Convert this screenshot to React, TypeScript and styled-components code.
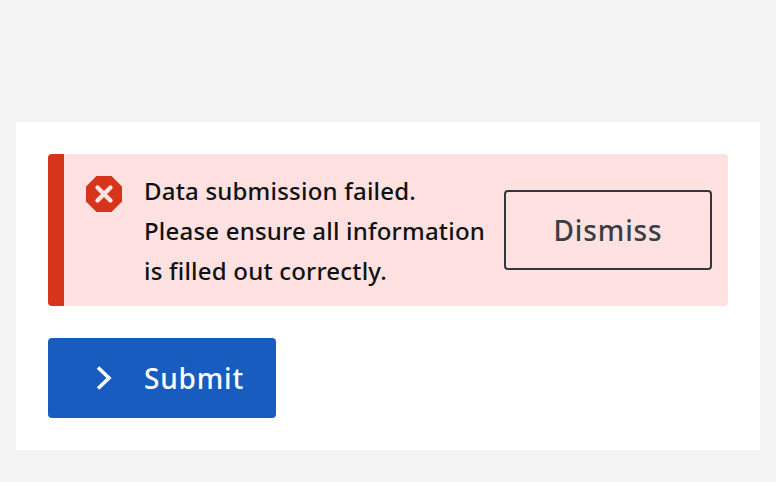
import React from 'react';
import styled, { createGlobalStyle } from 'styled-components';

const GlobalStyle = createGlobalStyle`
  html, body {
    margin: 0;
    height: 100%;
    background: #f4f4f4;
    font-family: "Noto Sans", "Liberation Sans", sans-serif;
  }
`;

function ErrorIcon() {
    return (
        <svg width="36" height="36" viewBox="0 0 36 36" aria-hidden="true">
            <polygon
                points="10.5,0 25.5,0 36,10.5 36,25.5 25.5,36 10.5,36 0,25.5 0,10.5"
                fill="#d6351b"
            />
            <path
                d="M11.5 11.5L24.5 24.5M24.5 11.5L11.5 24.5"
                stroke="#fde3e3"
                strokeWidth="4.4"
                strokeLinecap="round"
                fill="none"
            />
        </svg>
    );
}

function ChevronIcon() {
    return (
        <svg width="16" height="24" viewBox="0 0 16 24" aria-hidden="true">
            <path d="M2 1.5L13 12L2 22.5" stroke="#fff" strokeWidth="3.6" fill="none" />
        </svg>
    );
}

export default function App() {
    return (
        <Page>
            <GlobalStyle />
            <Panel>
                <Alert role="alert">
                    <IconSlot>
                        <ErrorIcon />
                    </IconSlot>
                    <Message>
                        Data submission failed.
                        <br />
                        Please ensure all information
                        <br />
                        is filled out correctly.
                    </Message>
                    <DismissButton type="button">Dismiss</DismissButton>
                </Alert>
                <SubmitButton type="button">
                    <ChevronIcon />
                    Submit
                </SubmitButton>
            </Panel>
        </Page>
    );
}

const Page = styled.div`
  padding: 122px 16px 32px;
`;

const Panel = styled.div`
  display: flex;
  flex-direction: column;
  align-items: flex-start;
  gap: 32px;
  padding: 32px;
  background: #fff;
`;

const Alert = styled.div`
  box-sizing: border-box;
  display: flex;
  align-items: center;
  align-self: stretch;
  height: 152px;
  padding-right: 16px;
  background: #ffe1e1;
  border-left: 16px solid #d6351b;
  border-radius: 4px;
`;

const IconSlot = styled.div`
  display: flex;
  align-self: flex-start;
  margin: 22px 22px 0;
`;

const Message = styled.p`
  flex: 1;
  margin: 2px 0 0;
  font-size: 24px;
  font-weight: 500;
  letter-spacing: 0.2px;
  line-height: 40px;
  color: #111;
`;

const DismissButton = styled.button`
  box-sizing: border-box;
  width: 208px;
  height: 80px;
  background: transparent;
  border: 2px solid #33373d;
  border-radius: 4px;
  font-family: inherit;
  font-size: 28px;
  font-weight: 500;
  letter-spacing: 0.9px;
  color: #3a3e44;
`;

const SubmitButton = styled.button`
  box-sizing: border-box;
  display: flex;
  align-items: center;
  gap: 32px;
  width: 228px;
  height: 80px;
  padding: 0 0 0 48px;
  background: #175cbe;
  border: 0;
  border-radius: 4px;
  font-family: inherit;
  font-size: 28px;
  font-weight: 500;
  letter-spacing: 0.8px;
  color: #fff;
`;
